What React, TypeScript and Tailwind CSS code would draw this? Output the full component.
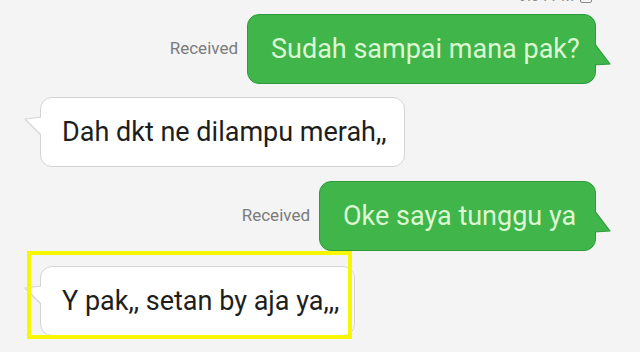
import React from 'react';

const font = { fontFamily: 'Roboto, "Noto Sans", sans-serif' };

function GreenTail() {
  return (
    <svg className="absolute right-[-17px] top-[28px]" width="19" height="24" viewBox="0 0 19 24">
      <path d="M1 0 L17 21 L1 22" fill="#3fb54a" stroke="#2f9a3b" strokeWidth="1.2" strokeLinejoin="round" />
      <rect x="0" y="0" width="2" height="24" fill="#3fb54a" />
    </svg>
  );
}

function WhiteTail() {
  return (
    <svg className="absolute left-[-17px] top-[18px]" width="19" height="22" viewBox="0 0 19 22">
      <path d="M18 1 L1 3 L18 20" fill="#ffffff" stroke="#d4d4d4" strokeWidth="1.2" strokeLinejoin="round" />
      <rect x="17" y="0" width="2" height="22" fill="#ffffff" />
    </svg>
  );
}

function Sent({ text, width }: { text: string; width: string }) {
  return (
    <div className="flex items-center justify-end gap-[9px] pr-[44px]">
      <span className="text-[17px] text-[#7b7b7b]">Received</span>
      <div className={`relative flex h-[70px] items-center rounded-[12px] border border-[#2f9a3b] bg-[#3fb54a] pl-[23px] ${width}`}>
        <span className="text-[27px] leading-none text-[#dcf8d2]">{text}</span>
        <GreenTail />
      </div>
    </div>
  );
}

function Incoming({ text, width }: { text: string; width: string }) {
  return (
    <div className={`relative flex h-[70px] items-center rounded-[12px] border border-[#d4d4d4] bg-white pl-[21px] ${width}`}>
      <span className="text-[27px] leading-none text-[#1e1e1e]">{text}</span>
      <WhiteTail />
    </div>
  );
}

export default function App() {
  return (
    <div className="flex h-[360px] w-[640px] flex-col overflow-hidden bg-white" style={font}>
      <div className="flex h-[352px] flex-col bg-[#f4f4f4]">
        <div className="flex h-[4px] justify-end overflow-hidden pr-[48px]">
          <div className="mt-[-11px] flex items-center gap-[6px]">
            <span className="text-[15px] text-[#8a8a8a]">9:04 PM</span>
            <span className="h-[12px] w-[12px] rounded-[2px] border border-[#8a8a8a]" />
          </div>
        </div>
        <div className="mt-[10px]">
          <Sent text="Sudah sampai mana pak?" width="w-[349px]" />
        </div>
        <div className="mt-[13px] pl-[40px]">
          <Incoming text="Dah dkt ne dilampu merah,," width="w-[365px]" />
        </div>
        <div className="mt-[14px]">
          <Sent text="Oke saya tunggu ya" width="w-[277px]" />
        </div>
        <div className="relative mt-[15px] pl-[40px]">
          <Incoming text="Y pak,, setan by aja ya,,," width="w-[315px]" />
          <div className="absolute left-[27px] top-[-15px] h-[88px] w-[325px] border-[4px] border-[#f7f700]" />
        </div>
      </div>
    </div>
  );
}
